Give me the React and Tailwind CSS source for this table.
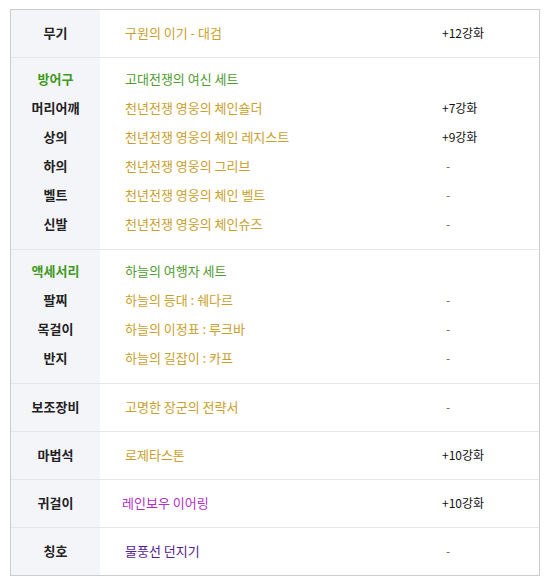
import * as React from "react";

const GOLD = "text-[#c9a02c]";
const GREEN_SET = "text-[#4f9a2e]";

const sections = [
  { rows: [{ label: "무기", value: "구원의 이기 - 대검", color: GOLD, extra: "+12강화" }] },
  {
    group: true,
    rows: [
      { label: "방어구", head: true, value: "고대전쟁의 여신 세트", color: GREEN_SET, extra: "" },
      { label: "머리어깨", value: "천년전쟁 영웅의 체인숄더", color: GOLD, extra: "+7강화" },
      { label: "상의", value: "천년전쟁 영웅의 체인 레지스트", color: GOLD, extra: "+9강화" },
      { label: "하의", value: "천년전쟁 영웅의 그리브", color: GOLD, extra: "-" },
      { label: "벨트", value: "천년전쟁 영웅의 체인 벨트", color: GOLD, extra: "-" },
      { label: "신발", value: "천년전쟁 영웅의 체인슈즈", color: GOLD, extra: "-" },
    ],
  },
  {
    group: true,
    rows: [
      { label: "액세서리", head: true, value: "하늘의 여행자 세트", color: GREEN_SET, extra: "" },
      { label: "팔찌", value: "하늘의 등대 : 쉐다르", color: GOLD, extra: "-" },
      { label: "목걸이", value: "하늘의 이정표 : 루크바", color: GOLD, extra: "-" },
      { label: "반지", value: "하늘의 길잡이 : 카프", color: GOLD, extra: "-" },
    ],
  },
  { rows: [{ label: "보조장비", value: "고명한 장군의 전략서", color: GOLD, extra: "-" }] },
  { rows: [{ label: "마법석", value: "로제타스톤", color: GOLD, extra: "+10강화" }] },
  { rows: [{ label: "귀걸이", value: "레인보우 이어링", color: "-ml-[3px] text-[#b12fc4]", extra: "+10강화" }] },
  { rows: [{ label: "칭호", value: "물풍선 던지기", color: "text-[#561c94]", extra: "-" }] },
];

const Section = ({ group, rows, last }) => {
  const pad = group ? "pt-[6px] pb-[11px]" : "pt-[8px] pb-[10px]";
  return (
    <div className={`flex ${last ? "" : "border-b border-[#e6e6e6]"}`}>
      <div className={`w-[89px] shrink-0 bg-[#f4f5f9] ${pad}`}>
        {rows.map((r) => (
          <div
            key={r.label}
            className={`flex h-[29px] items-center justify-center text-[13px] font-bold ${
              r.head ? "text-[#3f9a22]" : "text-[#222]"
            }`}
          >
            {r.label}
          </div>
        ))}
      </div>
      <div className={`flex-1 pl-[25px] ${pad}`}>
        {rows.map((r) => (
          <div key={r.label} className={`flex h-[29px] items-center text-[13px] ${r.color}`}>
            {r.value}
          </div>
        ))}
      </div>
      <div className={`w-[97px] shrink-0 ${pad}`}>
        {rows.map((r) => (
          <div
            key={r.label}
            className={`flex h-[29px] items-center text-[12px] ${
              r.extra === "-" ? "pl-[4px] text-[#666]" : "text-[#111]"
            }`}
          >
            {r.extra}
          </div>
        ))}
      </div>
    </div>
  );
};

export default function App() {
  return (
    <div
      className="min-h-screen bg-white pl-[10px] pt-[9px]"
      style={{ fontFamily: '"Noto Sans CJK KR", "Noto Sans", sans-serif' }}
    >
      <div className="w-[530px] border border-[#cccccc]">
        {sections.map((s, i) => (
          <Section key={i} group={s.group} rows={s.rows} last={i === sections.length - 1} />
        ))}
      </div>
    </div>
  );
}
